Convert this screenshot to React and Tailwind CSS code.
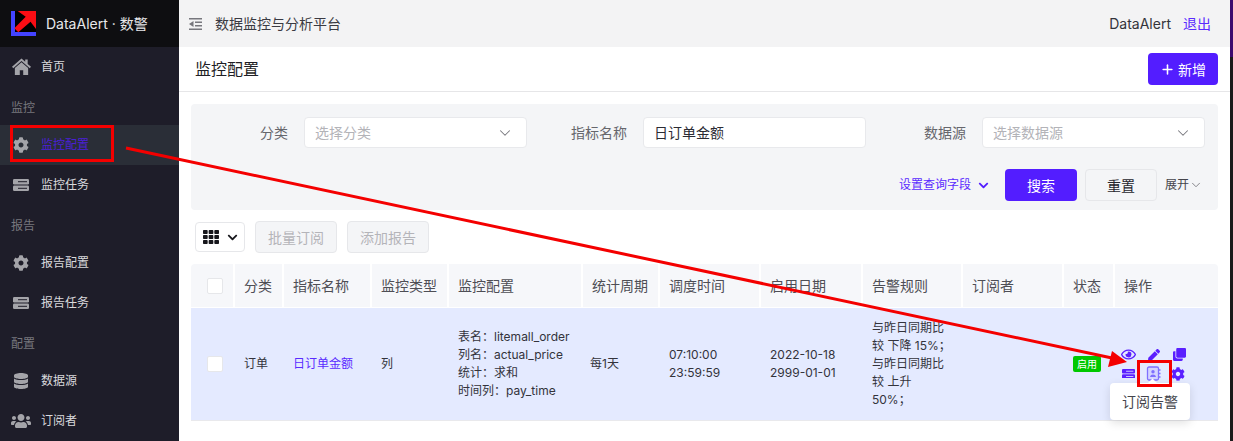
import React from "react";
import { FaCog, FaDatabase, FaUsers, FaRegEye, FaPen, FaClone, FaTh, FaChevronDown } from "react-icons/fa";
import { ChevronDown, Plus } from "lucide-react";

const font = { fontFamily: 'Inter, "Noto Sans CJK SC", sans-serif' };

function HomeIcon({ size = 18 }) {
  return (
    <svg width={size} height={size * 0.9} viewBox="0 0 20 18" fill="currentColor">
      <path d="M10 0.500L0 9.300 1.300 10.700 10 3.200l8.700 7.500 1.300-1.400-3.500-3.100V1.500h-2.600v2.400z" />
      <path d="M10 4.600L3 10.600V18h5.200v-5.200h3.600V18H17v-7.400z" />
    </svg>
  );
}

function ServerIcon({ size = 16, slot = "#1e1d29", color = "currentColor" }) {
  return (
    <svg width={size} height={size * 0.75} viewBox="0 0 16 12" fill={color}>
      <rect x="0" y="0" width="16" height="5.400" rx="1.200" />
      <rect x="0" y="6.600" width="16" height="5.400" rx="1.200" />
      <rect x="5" y="2.200" width="9" height="1" fill={slot} />
      <rect x="5" y="8.800" width="9" height="1" fill={slot} />
    </svg>
  );
}

function NavItem({ icon: Icon, label, active, size = 16, bg }) {
  return (
    <div className={`h-10 flex items-center ${active ? "bg-[#2a2e37] text-[#4a1fd6]" : "text-[#d9d9dc]"}`}>
      <div className="w-[41px] shrink-0 flex justify-center pl-[1px] text-[#a4a4a9]">
        <Icon size={size} slot={bg} />
      </div>
      <span className="text-[12px]">{label}</span>
    </div>
  );
}

function NavGroup({ children }) {
  return <div className="h-[38px] flex items-center pt-[3px] pl-[11px] text-[12px] text-[#77777d]">{children}</div>;
}

function Sidebar() {
  return (
    <aside className="w-[179px] shrink-0 bg-[#1e1d29] h-[441px] overflow-hidden">
      <div className="h-[47px] bg-[#0e0e11] flex items-center pl-[11px]">
        <svg width="25" height="25" viewBox="0 0 25 25" className="shrink-0">
          <rect width="25" height="25" fill="#000" />
          <path d="M0 0h4v21h21v4H0z" fill="#4343ff" />
          <path d="M6.700 0H25v18l-5.500-7.300L7.300 21.300l-4-4L14.700 5.700z" fill="#fa0d14" />
        </svg>
        <span className="ml-[10px] text-[14px] text-[#e8e8ea] whitespace-nowrap">DataAlert · 数警</span>
      </div>
      <NavItem icon={HomeIcon} label="首页" size={19} />
      <NavGroup>监控</NavGroup>
      <NavItem icon={FaCog} label="监控配置" active />
      <NavItem icon={ServerIcon} label="监控任务" />
      <NavGroup>报告</NavGroup>
      <NavItem icon={FaCog} label="报告配置" />
      <NavItem icon={ServerIcon} label="报告任务" />
      <NavGroup>配置</NavGroup>
      <NavItem icon={FaDatabase} label="数据源" />
      <NavItem icon={FaUsers} label="订阅者" size={20} />
    </aside>
  );
}

function Field({ label, placeholder, value, labelWidth }) {
  return (
    <div className="flex items-center">
      <label className={`${labelWidth} text-right text-[14px] text-[#66666c] pr-4`}>{label}</label>
      <div className="w-[223px] h-[31px] bg-white border border-[#e8e9ec] rounded-[4px] flex items-center justify-between pl-[10px] pr-[12px]">
        <span className={value ? "text-[14px] text-[#2b2b33]" : "text-[14px] text-[#b3b3b8]"}>{value || placeholder}</span>
        {!value && <ChevronDown size={18} strokeWidth={1.4} className="text-[#77777d]" />}
      </div>
    </div>
  );
}

const cols = [
  ["", "w-[42px]"],
  ["分类", "w-[49px]"],
  ["指标名称", "w-[88px]"],
  ["监控类型", "w-[77px]"],
  ["监控配置", "w-[134px]"],
  ["统计周期", "w-[77px]"],
  ["调度时间", "w-[101px]"],
  ["启用日期", "w-[102px]"],
  ["告警规则", "w-[100px]"],
  ["订阅者", "w-[101px]"],
  ["状态", "w-[51px]"],
  ["操作", "w-[105px]"],
];

function Checkbox() {
  return <div className="w-4 h-4 bg-white border border-[#e6e7ea] rounded-[2px]" />;
}

function Table() {
  const td = "pl-[11px] pr-[10px] align-middle text-[12px] leading-[18px] text-[#33333b] border-b border-[#e9e9ec] bg-[#e4eaff]";
  return (
    <table className="table-fixed w-[1027px] border-separate border-spacing-0 mt-[11px]">
      <thead>
        <tr className="h-[44px]">
          {cols.map(([t, w], i) => (
            <th
              key={i}
              className={`${w} ${i === 0 ? "pl-4 rounded-tl-[4px]" : "pl-[9px] border-l-2 border-l-white"} ${i === 11 ? "rounded-tr-[4px]" : ""} pr-0 bg-[#f6f7fa] text-left font-normal text-[14px] text-[#4e4e55] whitespace-nowrap border-b border-b-white`}
            >
              {i === 0 ? <Checkbox /> : t}
            </th>
          ))}
        </tr>
      </thead>
      <tbody>
        <tr className="h-[113px]">
          <td className={`${td} !pl-4`}><Checkbox /></td>
          <td className={td}>订单</td>
          <td className={`${td} !text-[#5a2bff]`}>日订单金额</td>
          <td className={td}>列</td>
          <td className={`${td} whitespace-nowrap`}>
            <div>表名：litemall_order</div>
            <div>列名：actual_price</div>
            <div>统计：求和</div>
            <div>时间列：pay_time</div>
          </td>
          <td className={`${td} !pl-[9px]`}>每1天</td>
          <td className={td}>
            <div>07:10:00</div>
            <div>23:59:59</div>
          </td>
          <td className={td}>
            <div>2022-10-18</div>
            <div>2999-01-01</div>
          </td>
          <td className={td}>
            <div>与昨日同期比</div>
            <div>较 下降 15%；</div>
            <div>与昨日同期比</div>
            <div>较 上升</div>
            <div>50%；</div>
          </td>
          <td className={td}></td>
          <td className={`${td} !px-0`}>
            <span className="ml-[11px] inline-flex items-center justify-center w-[28px] h-4 rounded-[2px] bg-[#00c800] text-white text-[10px] leading-none">启用</span>
          </td>
          <td className={`${td} !pl-[3px] !pr-0`}>
            <div className="grid grid-cols-3 w-[76px] gap-y-[4px] items-center text-[#5a1fff] justify-items-center">
              <FaRegEye size={15} />
              <FaPen size={12} />
              <FaClone size={13} />
              <ServerIcon size={13} slot="#e4eaff" />
              <svg width="15" height="15" viewBox="0 0 15 15" fill="#d5d5ff" stroke="#7f70ff" strokeWidth="1.300">
                <rect x="1.500" y="1" width="11" height="13" rx="1.500" />
                <path d="M13 4h1.500M13 7.500h1.500M13 11h1.500" fill="none" />
                <circle cx="7" cy="5.800" r="1.700" fill="#7f70ff" stroke="none" />
                <path d="M4 11c.4-3.300 5.600-3.300 6 0z" fill="#7f70ff" stroke="none" />
              </svg>
              <FaCog size={14} className="mr-[3px]" />
            </div>
          </td>
        </tr>
      </tbody>
    </table>
  );
}

function Main() {
  return (
    <main className="w-[1051px] shrink-0 h-[441px] bg-white overflow-hidden">
      <header className="h-[47px] bg-[#f3f3f4] flex items-center justify-between pl-[10px] pr-[19px]">
        <div className="flex items-center gap-[13px]">
          <svg width="13" height="12" viewBox="0 0 13 12" className="text-[#77777d]" fill="currentColor">
            <path d="M0 0h13v1.500H0zM6 3.500h7V5H6zM6 7h7v1.500H6zM0 10.500h13V12H0z" />
            <path d="M4.500 3v6L0 6z" />
          </svg>
          <span className="text-[14px] text-[#3a3a42]">数据监控与分析平台</span>
        </div>
        <div className="flex items-center gap-[12px] text-[14px]">
          <span className="text-[#33333b]">DataAlert</span>
          <span className="text-[#5a2bff]">退出</span>
        </div>
      </header>
      <div className="h-[45px] border-b border-[#e6e6e8] flex items-center justify-between pl-[16px] pr-[12px]">
        <h1 className="text-[16px] font-normal text-[#1f1f26]">监控配置</h1>
        <button className="w-[70px] h-8 bg-[#531dff] rounded-[4px] text-white text-[14px] flex items-center justify-center gap-[3px]">
          <Plus size={15} strokeWidth={2.5} />
          新增
        </button>
      </div>
      <div className="mx-[12px] mt-[12px]">
        <section className="h-[106px] bg-[#f4f5f7] rounded-[4px] pt-[13px] pr-[13px]">
          <div className="flex items-center justify-between">
            <Field label="分类" placeholder="选择分类" labelWidth="w-[113px]" />
            <Field label="指标名称" value="日订单金额" labelWidth="w-[116px]" />
            <Field label="数据源" placeholder="选择数据源" labelWidth="w-[116px]" />
          </div>
          <div className="flex items-center justify-end mt-[21px] -mr-[13px] pr-[15px]">
            <span className="text-[12px] text-[#5a2bff]">设置查询字段</span>
            <FaChevronDown size={11} className="ml-[7px] text-[#531dff]" />
            <button className="ml-4 w-[72px] h-8 bg-[#531dff] rounded-[4px] text-white text-[14px]">搜索</button>
            <button className="ml-2 w-[72px] h-8 bg-[#f4f5f7] border border-[#e6e7ea] rounded-[4px] text-[#26262d] text-[14px]">重置</button>
            <span className="ml-2 text-[12px] text-[#44444b]">展开</span>
            <ChevronDown size={14} strokeWidth={1.5} className="text-[#77777d]" />
          </div>
        </section>
        <div className="flex items-center mt-[11px] pl-1 gap-[10px]">
          <button className="w-[50px] h-[30px] bg-white border border-[#e6e7ea] rounded-[4px] flex items-center justify-center gap-2 text-[#17171c]">
            <FaTh size={16} />
            <FaChevronDown size={11} />
          </button>
          <button className="w-[82px] h-8 bg-[#f4f5f7] border border-[#e6e7ea] rounded-[4px] text-[14px] text-[#b4b4b9]">批量订阅</button>
          <button className="w-[82px] h-8 bg-[#f4f5f7] border border-[#e6e7ea] rounded-[4px] text-[14px] text-[#b4b4b9]">添加报告</button>
        </div>
        <Table />
      </div>
    </main>
  );
}

function Annotations() {
  return (
    <svg className="absolute left-0 top-0 pointer-events-none" width="1233" height="441" fill="none">
      <rect x="11.500" y="126.500" width="101" height="34" stroke="#f40000" strokeWidth="3" />
      <rect x="1138.500" y="361.500" width="32" height="24" stroke="#f40000" strokeWidth="3" />
      <path d="M126 148L1112 358" stroke="#f40000" strokeWidth="3" />
      <path d="M1127 362L1112 351L1108 367z" fill="#f40000" />
    </svg>
  );
}

function Tooltip() {
  return (
    <div className="absolute left-[1110px] top-[383px] w-[80px] h-[37px] bg-white rounded-[4px] shadow-[0_3px_10px_rgba(0,0,0,0.12)] flex items-center justify-center text-[14px] text-[#44444b]">
      <span className="absolute -top-[3px] left-[39px] w-[7px] h-[7px] bg-white rotate-45" />
      <span className="relative">订阅告警</span>
    </div>
  );
}

export default function App() {
  return (
    <div className="relative flex w-[1233px] h-[441px] overflow-hidden" style={font}>
      <Sidebar />
      <Main />
      <div className="flex-1 flex flex-col bg-[#1a1a1a]">
        <div className="h-[57px] bg-[#3c0a6e]" />
      </div>
      <Tooltip />
      <Annotations />
    </div>
  );
}
